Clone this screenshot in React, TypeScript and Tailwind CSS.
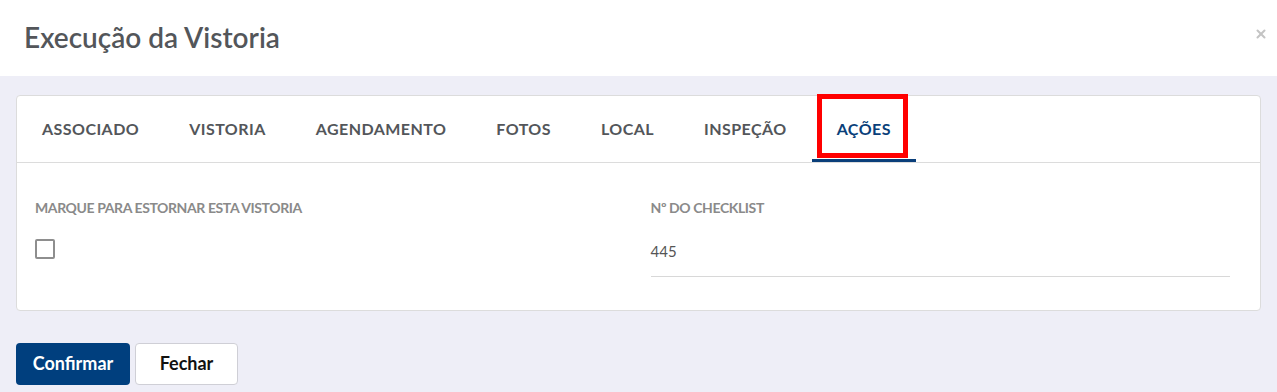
import { useState } from "react";
import { X } from "lucide-react";

const tabs = ["ASSOCIADO", "VISTORIA", "AGENDAMENTO", "FOTOS", "LOCAL", "INSPEÇÃO", "AÇÕES"];

export default function App() {
  const [active, setActive] = useState("AÇÕES");
  const [estornar, setEstornar] = useState(false);

  return (
    <div
      className="w-[1277px] h-[392px] bg-[#eeeef7] overflow-hidden"
      style={{ fontFamily: "Lato, 'Open Sans', sans-serif" }}
    >
      {/* Header */}
      <div className="h-[76px] bg-white flex items-center justify-between pl-6 pr-[9px]">
        <h1 className="text-[28px] font-semibold text-[#53565a] pb-[3px]">Execução da Vistoria</h1>
        <button className="text-[#c4c4c4] mb-[8px]">
          <X className="w-[14px] h-[14px]" strokeWidth={3.5} />
        </button>
      </div>

      <div className="px-4 pt-[19px]">
        {/* Card */}
        <div className="bg-white border border-[#dcdcdc] rounded-[4px]">
          <div className="flex border-b border-[#dcdcdc] h-[67px]">
            {tabs.map((t) => {
              const isActive = t === active;
              return (
                <button
                  key={t}
                  onClick={() => setActive(t)}
                  className={`relative px-[25px] h-full text-[16px] font-bold tracking-[0.45px] ${
                    isActive ? "text-[#0a3f7a] border-b-[3px] border-[#0a3f7a] pt-[3px]" : "text-[#53565a]"
                  }`}
                >
                  {t}
                  {isActive && (
                    <span className="absolute left-[5px] right-[8px] top-[-2px] bottom-[1px] border-[5px] border-[#ff0000]" />
                  )}
                </button>
              );
            })}
          </div>

          <div className="grid grid-cols-2 px-[18px] pt-[35px] pb-[33px]">
            <div>
              <div className="text-[14px] leading-[20px] font-bold text-[#8a8a8a] tracking-[-0.4px]">
                MARQUE PARA ESTORNAR ESTA VISTORIA
              </div>
              <button
                onClick={() => setEstornar(!estornar)}
                className="mt-[21px] w-[20px] h-[20px] border-2 border-[#8e8e8e] rounded-[2px] flex items-center justify-center"
              >
                {estornar && <span className="w-[10px] h-[10px] bg-[#0a3f7a]" />}
              </button>
            </div>
            <div className="pl-[12px]">
              <div className="text-[14px] leading-[20px] font-bold text-[#8a8a8a] tracking-[-0.4px]">Nº DO CHECKLIST</div>
              <div className="mt-[22px] pb-[13px] border-b border-[#d8d8d8] mr-[12px] text-[15px] text-[#555]">445</div>
            </div>
          </div>
        </div>

        {/* Footer buttons */}
        <div className="flex gap-[5px] mt-[32px]">
          <button className="h-[42px] w-[114px] rounded-[4px] bg-[#003f7e] text-white text-[18px] font-bold">
            Confirmar
          </button>
          <button className="h-[42px] w-[103px] rounded-[4px] bg-white border border-[#cfcfd6] text-[#111] text-[18px] font-bold">
            Fechar
          </button>
        </div>
      </div>
    </div>
  );
}
